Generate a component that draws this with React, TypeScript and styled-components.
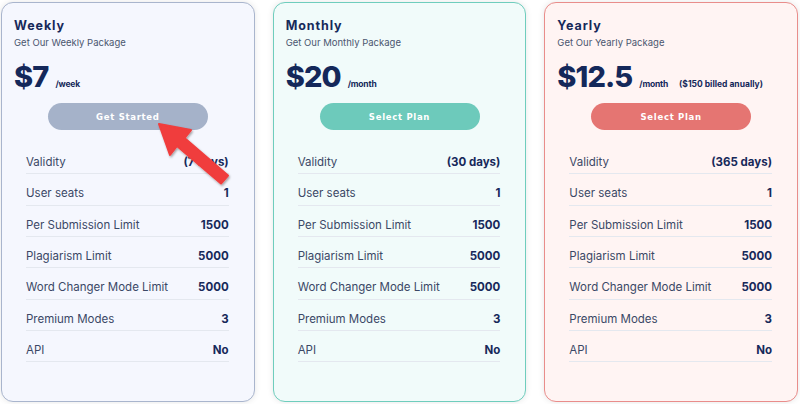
import styled, { createGlobalStyle } from "styled-components";

type Tone = "gray" | "teal" | "red";

const palette: Record<Tone, { bg: string; border: string; button: string }> = {
  gray: { bg: "#f5f7fe", border: "#a9b5cd", button: "#a5b2c9" },
  teal: { bg: "#f1fbfa", border: "#6fcdbd", button: "#6dcabb" },
  red: { bg: "#fff4f3", border: "#e98d8b", button: "#e57572" },
};

interface Plan {
  name: string;
  price: string;
  period: string;
  note?: string;
  cta: string;
  tone: Tone;
  days: string;
}

const plans: Plan[] = [
  { name: "Weekly", price: "$7", period: "/week", cta: "Get Started", tone: "gray", days: "(7 days)" },
  { name: "Monthly", price: "$20", period: "/month", cta: "Select Plan", tone: "teal", days: "(30 days)" },
  {
    name: "Yearly",
    price: "$12.5",
    period: "/month",
    note: "($150 billed anually)",
    cta: "Select Plan",
    tone: "red",
    days: "(365 days)",
  },
];

const GlobalStyle = createGlobalStyle`
  body {
    margin: 0;
    background: #ffffff;
    font-family: Inter, "Noto Sans", sans-serif;
  }
`;

export default function App() {
  return (
    <>
      <GlobalStyle />
      <Page>
        {plans.map((plan) => (
          <Card key={plan.name} $tone={plan.tone}>
            <Title>{plan.name}</Title>
            <Subtitle>Get Our {plan.name} Package</Subtitle>
            <PriceRow>
              <Price>{plan.price}</Price>
              <Period>{plan.period}</Period>
              {plan.note && <Note>{plan.note}</Note>}
            </PriceRow>
            <CtaButton $tone={plan.tone}>{plan.cta}</CtaButton>
            <Features>
              <Feature>
                <span>Validity</span>
                <Value>{plan.days}</Value>
              </Feature>
              <Feature>
                <span>User seats</span>
                <Value>1</Value>
              </Feature>
              <Feature>
                <span>Per Submission Limit</span>
                <Value>1500</Value>
              </Feature>
              <Feature>
                <span>Plagiarism Limit</span>
                <Value>5000</Value>
              </Feature>
              <Feature>
                <span>Word Changer Mode Limit</span>
                <Value>5000</Value>
              </Feature>
              <Feature>
                <span>Premium Modes</span>
                <Value>3</Value>
              </Feature>
              <Feature>
                <span>API</span>
                <Value>No</Value>
              </Feature>
            </Features>
          </Card>
        ))}
        {/* annotation arrow drawn over the first card */}
        <Arrow width="800" height="404" viewBox="0 0 800 404">
          <defs>
            <filter id="arrowShadow" x="-20%" y="-20%" width="140%" height="140%">
              <feDropShadow dx="1" dy="1.5" stdDeviation="1.2" floodColor="#000" floodOpacity="0.35" />
            </filter>
          </defs>
          <polygon
            points="159,124 191,130 184.5,138 228,175.5 221,183.5 177,146 170,155"
            fill="#f03c3c"
            stroke="#f03c3c"
            strokeWidth="2"
            strokeLinejoin="round"
            filter="url(#arrowShadow)"
          />
        </Arrow>
      </Page>
    </>
  );
}

const Page = styled.div`
  position: relative;
  display: flex;
  gap: 18px;
  padding: 2px 2px 2px 1px;
  width: 800px;
  height: 404px;
  box-sizing: border-box;
`;

const Card = styled.div<{ $tone: Tone }>`
  width: 254px;
  height: 400px;
  box-sizing: border-box;
  display: flex;
  flex-direction: column;
  padding: 15px 25px 0 12px;
  background: ${(p) => palette[p.$tone].bg};
  border: 1px solid ${(p) => palette[p.$tone].border};
  border-radius: 12px;
  box-shadow: 0 0 6px rgba(0, 0, 0, 0.1);
`;

const Title = styled.div`
  font-size: 12.5px;
  line-height: 16px;
  font-weight: 700;
  letter-spacing: 0.9px;
  color: #17295a;
`;

const Subtitle = styled.div`
  margin-top: 2px;
  font-size: 9.5px;
  line-height: 14px;
  color: #4a566f;
`;

const PriceRow = styled.div`
  margin-top: 12px;
  display: flex;
  align-items: baseline;
`;

const Price = styled.span`
  font-size: 29px;
  line-height: 30px;
  font-weight: 800;
  letter-spacing: -0.9px;
  color: #14285a;
`;

const Period = styled.span`
  margin-left: 7px;
  font-size: 8.5px;
  font-weight: 700;
  letter-spacing: -0.2px;
  color: #14285a;
`;

const Note = styled.span`
  margin-left: 11px;
  font-size: 8.5px;
  font-weight: 700;
  color: #14285a;
`;

const CtaButton = styled.button<{ $tone: Tone }>`
  align-self: center;
  margin: 11px -13px 0 0;
  width: 160px;
  height: 27px;
  border: none;
  border-radius: 14px;
  background: ${(p) => palette[p.$tone].button};
  color: #ffffff;
  font-family: "DejaVu Sans", Verdana, sans-serif;
  font-size: 8.5px;
  font-weight: 700;
  letter-spacing: 0.7px;
`;

const Features = styled.div`
  margin: 13px 0 0 12px;
  display: flex;
  flex-direction: column;
`;

const Feature = styled.div`
  display: flex;
  justify-content: space-between;
  align-items: center;
  padding: 12px 0 3.33px;
  line-height: 15px;
  font-size: 11.5px;
  color: #3b4866;
  border-bottom: 1px solid #e4e8ef;
`;

const Value = styled.span`
  font-weight: 700;
  color: #17295a;
`;

const Arrow = styled.svg`
  position: absolute;
  left: 0;
  top: 0;
  pointer-events: none;
`;
